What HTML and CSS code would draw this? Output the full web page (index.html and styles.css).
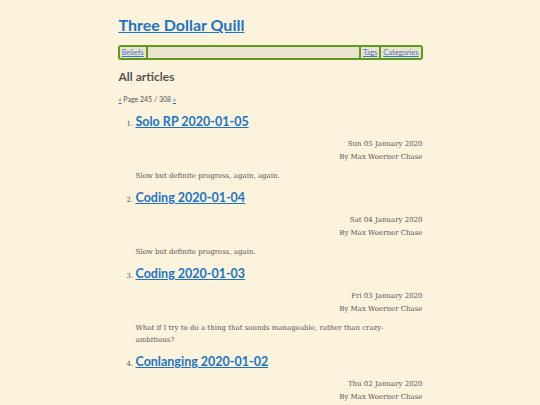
FILE: index.html
```html
<!DOCTYPE html>
<html lang="en">
<head>
<meta charset="utf-8">
<title>Three Dollar Quill</title>
<link rel="stylesheet" href="styles.css">
</head>
<body>
<div class="page">
  <header class="site-header">
    <h1 class="site-title"><a href="#">Three Dollar Quill</a></h1>
    <nav class="site-nav">
      <a class="nav-link nav-left" href="#">Beliefs</a>
      <span class="nav-spacer"></span>
      <a class="nav-link nav-right" href="#">Tags</a>
      <a class="nav-link nav-right" href="#">Categories</a>
    </nav>
  </header>
  <main>
    <h2 class="section-title">All articles</h2>
    <p class="pager"><a href="#">«</a> Page 245 / 308 <a href="#">»</a></p>
    <ol class="articles">
      <li class="article">
        <h3 class="article-title"><a href="#">Solo RP 2020-01-05</a></h3>
        <div class="meta">
          <div>Sun 05 January 2020</div>
          <div>By Max Woerner Chase</div>
        </div>
        <p class="summary">Slow but definite progress, again, again.</p>
      </li>
      <li class="article">
        <h3 class="article-title"><a href="#">Coding 2020-01-04</a></h3>
        <div class="meta">
          <div>Sat 04 January 2020</div>
          <div>By Max Woerner Chase</div>
        </div>
        <p class="summary">Slow but definite progress, again.</p>
      </li>
      <li class="article">
        <h3 class="article-title"><a href="#">Coding 2020-01-03</a></h3>
        <div class="meta">
          <div>Fri 03 January 2020</div>
          <div>By Max Woerner Chase</div>
        </div>
        <p class="summary">What if I try to do a thing that sounds manageable, rather than crazy-ambitious?</p>
      </li>
      <li class="article">
        <h3 class="article-title"><a href="#">Conlanging 2020-01-02</a></h3>
        <div class="meta">
          <div>Thu 02 January 2020</div>
          <div>By Max Woerner Chase</div>
        </div>
        <p class="summary">Slow but definite progress.</p>
      </li>
    </ol>
  </main>
</div>
</body>
</html>
```

FILE: styles.css
```css
html, body {
  margin: 0;
  padding: 0;
  background: #fbf3dc;
}
body {
  font-family: "DejaVu Serif", serif;
  color: #555555;
  font-size: 7px;
}
a {
  color: #1b74c5;
}
.page {
  width: 305px;
  margin: 0 auto;
  padding-top: 14px;
}
.site-title {
  font-family: "Lato", "Noto Sans", sans-serif;
  font-weight: 700;
  font-size: 16px;
  line-height: 22px;
  margin: 0 0 9px 1px;
}
.site-nav {
  display: flex;
  align-items: stretch;
  border: 2px solid #5f9a1c;
  border-radius: 3px;
  background: #ebe3cf;
  height: 11px;
  font-family: "Lato", "Noto Sans", sans-serif;
  font-size: 7.5px;
  line-height: 11px;
}
.nav-link {
  padding: 0 2px;
  color: #3b7cbf;
}
.nav-left {
  border-right: 2px solid #5f9a1c;
}
.nav-right {
  border-left: 2px solid #5f9a1c;
}
.nav-spacer {
  flex: 1;
}
.section-title {
  font-family: "Lato", "Noto Sans", sans-serif;
  font-weight: 700;
  font-size: 12px;
  line-height: 16px;
  margin: 9px 0 0 1px;
  color: #555555;
}
.pager {
  font-family: "Lato", "Noto Sans", sans-serif;
  font-size: 7px;
  margin: 9px 0 0 1px;
  line-height: 10px;
}
.articles {
  margin: 10px 0 0 0;
  padding-left: 18px;
  list-style: decimal;
}
.article::marker {
  font-size: 7px;
  color: #555555;
}
.article-title {
  font-family: "Lato", "Noto Sans", sans-serif;
  font-weight: 700;
  font-size: 12.5px;
  line-height: 16px;
  margin: 0;
}
.meta {
  text-align: right;
  line-height: 13px;
  margin-top: 8px;
}
.summary {
  margin: 6px 0 8px 0;
  padding-right: 24px;
  line-height: 12px;
}
```
